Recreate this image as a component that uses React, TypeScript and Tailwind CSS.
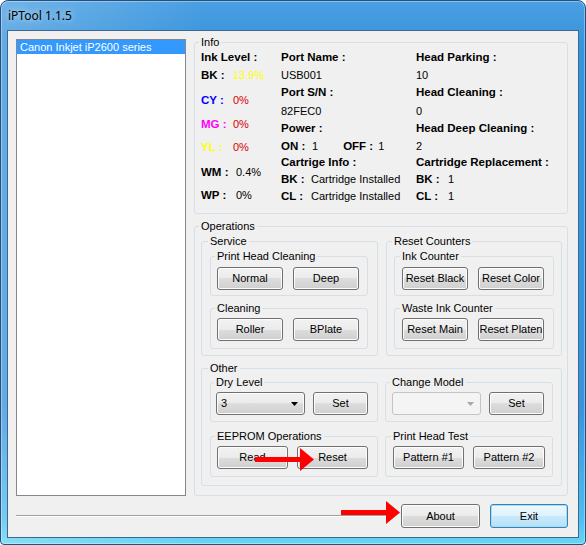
import type { ReactNode } from 'react';

// Win7 push-button face
const face =
  'rounded-[3px] border border-[#707070] bg-[linear-gradient(#f2f2f2_0%,#ebebeb_50%,#dddddd_50%,#cfcfcf_100%)] shadow-[inset_0_0_0_1px_#fcfcfc]';

function Button({ label, w }: { label: string; w: string }) {
  return (
    <button type="button" className={`${w} h-[23px] shrink-0 ${face} text-[11px] leading-none text-black`}>
      {label}
    </button>
  );
}

function Group({ title, className, children }: { title: string; className: string; children?: ReactNode }) {
  return (
    <fieldset className={`shrink-0 rounded-[3px] border border-[#d5dfe5] ${className}`}>
      <legend className="-ml-[2px] px-[2px] text-[11px] leading-[12px] text-black">{title}</legend>
      {children}
    </fieldset>
  );
}

function Combo({ value, disabled }: { value?: string; disabled?: boolean }) {
  return (
    <div
      className={`flex h-[23px] w-[89px] shrink-0 items-center justify-between pl-[4px] pr-[6px] text-[11px] ${
        disabled ? 'rounded-[3px] border border-[#c4c4c4] bg-[#f4f4f4]' : face
      }`}
    >
      <span>{value}</span>
      <svg width="7" height="4" viewBox="0 0 7 4">
        <path d="M0 0h7L3.5 4z" fill={disabled ? '#a8a8a8' : '#000'} />
      </svg>
    </div>
  );
}

function Arrow({ className }: { className: string }) {
  return (
    <svg className={`pointer-events-none absolute ${className}`} width="59" height="23" viewBox="0 0 59 23">
      <path d="M0 9h45V0l14 11.5L45 23v-9H0z" fill="#ff0000" />
    </svg>
  );
}

const rowH = ['h-[18px]', 'h-[17px]', 'h-[18px]', 'h-[18px]', 'h-[18px]', 'h-[17px]', 'h-[16px]', 'h-[17px]', 'h-[17px]'];

const bold = 'text-[11.5px] font-bold';

const inks = [
  { k: 'BK :', v: '13.9%', kc: 'text-black', vc: 'text-[#ffff00]', mt: '', w: 'w-[32px]' },
  { k: 'CY :', v: '0%', kc: 'text-[#0000ff]', vc: 'text-[#d40000]', mt: 'mt-[8px]', w: 'w-[32px]' },
  { k: 'MG :', v: '0%', kc: 'text-[#ff00ff]', vc: 'text-[#d40000]', mt: 'mt-[7px]', w: 'w-[32px]' },
  { k: 'YL :', v: '0%', kc: 'text-[#ffff00]', vc: 'text-[#d40000]', mt: 'mt-[6px]', w: 'w-[32px]' },
  { k: 'WM :', v: '0.4%', kc: 'text-black', vc: 'text-black', mt: 'mt-[8px]', w: 'w-[35px]' },
  { k: 'WP :', v: '0%', kc: 'text-black', vc: 'text-black', mt: 'mt-[6px]', w: 'w-[35px]' },
];

function Pair({ k, v, w }: { k: string; v: string; w: string }) {
  return (
    <>
      <span className={`${w} ${bold}`}>{k}</span>
      <span>{v}</span>
    </>
  );
}

function Info() {
  const mid: ReactNode[] = [
    <span className={bold}>Port Name :</span>,
    <span>USB001</span>,
    <span className={bold}>Port S/N :</span>,
    <span>82FEC0</span>,
    <span className={bold}>Power :</span>,
    <>
      <Pair k="ON :" v="1" w="w-[31px]" />
      <span className="w-[25px]" />
      <Pair k="OFF :" v="1" w="w-[35px]" />
    </>,
    <span className={bold}>Cartrige Info :</span>,
    <Pair k="BK :" v="Cartridge Installed" w="w-[30px]" />,
    <Pair k="CL :" v="Cartridge Installed" w="w-[30px]" />,
  ];
  const right: ReactNode[] = [
    <span className={bold}>Head Parking :</span>,
    <span>10</span>,
    <span className={bold}>Head Cleaning :</span>,
    <span>0</span>,
    <span className={bold}>Head Deep Cleaning :</span>,
    <span>2</span>,
    <span className={bold}>Cartridge Replacement :</span>,
    <Pair k="BK :" v="1" w="w-[32px]" />,
    <Pair k="CL :" v="1" w="w-[32px]" />,
  ];

  return (
    <Group title="Info" className="h-[178px] w-[374px] pl-[6px]">
      <div className="flex pt-[1px] text-[11px] text-black">
        <div className="w-[80px]">
          <div className={`flex h-[18px] items-center ${bold}`}>Ink Level :</div>
          {inks.map((r) => (
            <div key={r.k} className={`flex h-[17px] items-center ${r.mt}`}>
              <span className={`${r.w} ${bold} ${r.kc}`}>{r.k}</span>
              <span className={r.vc}>{r.v}</span>
            </div>
          ))}
        </div>
        <div className="w-[135px]">
          {mid.map((c, i) => (
            <div key={i} className={`flex items-center whitespace-nowrap ${rowH[i]}`}>
              {c}
            </div>
          ))}
        </div>
        <div>
          {right.map((c, i) => (
            <div key={i} className={`flex items-center whitespace-nowrap ${rowH[i]}`}>
              {c}
            </div>
          ))}
        </div>
      </div>
    </Group>
  );
}

function Operations() {
  return (
    <Group title="Operations" className="mt-[6px] h-[276px] w-[374px] pl-[6px] pr-[5px] pt-[3px]">
      <div className="flex justify-between">
        <Group title="Service" className="h-[121px] w-[177px] pl-[8px] pt-[3px]">
          <Group title="Print Head Cleaning" className="h-[46px] w-[158px] pl-[6px] pt-[5px]">
            <div className="flex gap-[10px]">
              <Button label="Normal" w="w-[66px]" />
              <Button label="Deep" w="w-[66px]" />
            </div>
          </Group>
          <Group title="Cleaning" className="mt-[6px] h-[47px] w-[158px] pl-[6px] pt-[4px]">
            <div className="flex gap-[10px]">
              <Button label="Roller" w="w-[66px]" />
              <Button label="BPlate" w="w-[66px]" />
            </div>
          </Group>
        </Group>
        <Group title="Reset Counters" className="h-[121px] w-[176px] pl-[7px] pt-[3px]">
          <Group title="Ink Counter" className="h-[46px] w-[160px] pl-[7px] pt-[5px]">
            <div className="flex gap-[10px]">
              <Button label="Reset Black" w="w-[66px]" />
              <Button label="Reset Color" w="w-[66px]" />
            </div>
          </Group>
          <Group title="Waste Ink Counter" className="mt-[6px] h-[47px] w-[160px] pl-[7px] pt-[4px]">
            <div className="flex gap-[10px]">
              <Button label="Reset Main" w="w-[66px]" />
              <Button label="Reset Platen" w="w-[66px]" />
            </div>
          </Group>
        </Group>
      </div>

      <Group title="Other" className="mt-[6px] h-[124px] w-[361px] pl-[8px] pt-[2px]">
        <div className="flex gap-[7px]">
          <Group title="Dry Level" className="h-[46px] w-[168px] pl-[5px] pt-[4px]">
            <div className="flex items-center gap-[8px]">
              <Combo value="3" />
              <Button label="Set" w="w-[55px]" />
            </div>
          </Group>
          <Group title="Change Model" className="h-[46px] w-[168px] pl-[6px] pt-[4px]">
            <div className="flex items-center gap-[8px]">
              <Combo disabled />
              <Button label="Set" w="w-[55px]" />
            </div>
          </Group>
        </div>
        <div className="mt-[8px] flex gap-[7px]">
          <Group title="EEPROM Operations" className="h-[47px] w-[168px] pl-[6px] pt-[4px]">
            <div className="flex gap-[9px]">
              <Button label="Read" w="w-[71px]" />
              <Button label="Reset" w="w-[71px]" />
            </div>
          </Group>
          <Group title="Print Head Test" className="h-[47px] w-[168px] pl-[7px] pt-[4px]">
            <div className="flex gap-[9px]">
              <Button label="Pattern #1" w="w-[71px]" />
              <Button label="Pattern #2" w="w-[72px]" />
            </div>
          </Group>
        </div>
      </Group>
    </Group>
  );
}

export default function App() {
  return (
    <div className="h-[545px] w-[586px] bg-white font-['Liberation_Sans',Arial,sans-serif]">
      <div className="flex h-full w-full flex-col rounded-t-[8px] rounded-b-[4px] border border-[#23507e] bg-[linear-gradient(90deg,rgba(255,255,255,0.22)_0%,rgba(255,255,255,0)_35%),linear-gradient(180deg,#4a9fe2_0%,#3894dc_8%,#3a93dc_75%,#4fbcee_95%,#66d6f4_100%)] px-[6px] pb-[6px] shadow-[inset_0_0_0_1px_rgba(255,255,255,0.35)]">
        <div className="flex h-[29px] items-center pl-[1px] font-['Noto_Sans',sans-serif] text-[12px] text-black [text-shadow:0_0_6px_rgba(255,255,255,0.85)]">
          iPTool 1.1.5
        </div>

        <div className="relative flex h-[508px] w-[572px] flex-col border border-[#3b6791] bg-[#f0f0f0] pl-[8px] pr-[10px] pt-[5px] text-black">
          <div className="flex items-start">
            <div className="mt-[3px] h-[457px] w-[170px] shrink-0 border border-[#828790] bg-white">
              <div className="flex h-[14px] items-center bg-[#3399ff] pl-[3px] text-[11px] text-white">
                Canon Inkjet iP2600 series
              </div>
            </div>
            <div className="ml-[8px] flex flex-col">
              <Info />
              <Operations />
            </div>
          </div>

          <div className="mt-[8px] flex">
            <div className="mr-[6px] mt-[11px] h-[2px] flex-1 border-t border-[#a0a0a0] bg-white" />
            <button type="button" className={`h-[24px] w-[79px] ${face} text-[11px]`}>
              About
            </button>
            <button
              type="button"
              className="ml-[10px] h-[24px] w-[78px] rounded-[3px] border border-[#3c7fb1] bg-[linear-gradient(#ecf8fd_0%,#dff2fc_50%,#c9eafb_50%,#b6e1f7_100%)] text-[11px] shadow-[inset_0_0_0_1px_#9fe0f7]"
            >
              Exit
            </button>
          </div>

          <Arrow className="left-[247px] top-[417px]" />
          <Arrow className="left-[333px] top-[470px]" />
        </div>
      </div>
    </div>
  );
}
